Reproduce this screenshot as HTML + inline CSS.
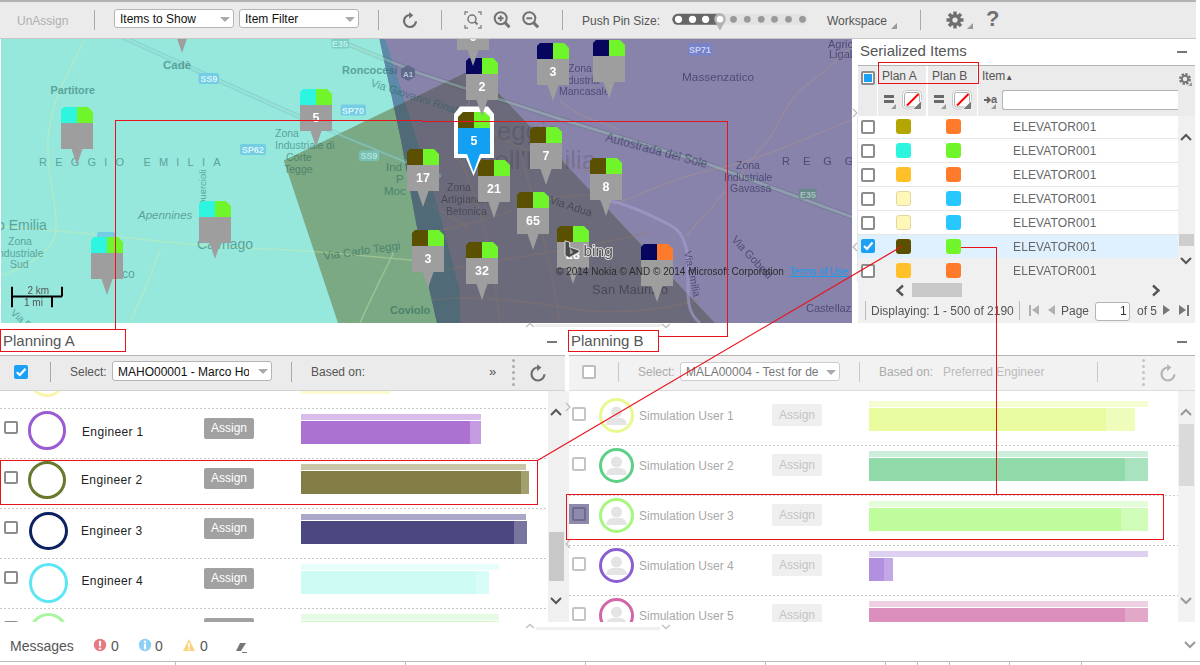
<!DOCTYPE html>
<html><head><meta charset="utf-8">
<style>
*{box-sizing:border-box;margin:0;padding:0}
html,body{width:1200px;height:665px;overflow:hidden;background:#fff;font-family:"Liberation Sans",sans-serif;position:relative}
.a{position:absolute}
.t{position:absolute;white-space:nowrap;line-height:1}
.sep{position:absolute;width:1px;background:#a9a9a9}
.dd{position:absolute;height:19px;background:#fff;border:1px solid #b5b5b5;border-radius:3px;font-size:12px;color:#111;padding:2px 0 0 5px;white-space:nowrap;overflow:hidden;line-height:14px}
.dd:after{content:"";position:absolute;right:3px;top:7px;border-left:5px solid transparent;border-right:5px solid transparent;border-top:5px solid #aaa}
.cb{position:absolute;width:14px;height:14px;border:2px solid #8c8c8c;border-radius:2px;background:#fff}
.sq{position:absolute;width:15px;height:15px;border-radius:3px}
.dots{position:absolute;height:1px;background-image:linear-gradient(to right,#c8c8c8 60%,transparent 60%);background-size:4px 1px}
.btn{position:absolute;width:50px;height:21px;background:#a1a1a1;border-radius:2px;color:#fff;font-size:12px;line-height:21px;text-align:center}
.btnd{position:absolute;width:50px;height:22px;background:#efefef;border-radius:2px;color:#c4c4c4;font-size:12px;line-height:22px;text-align:center}
.ring{position:absolute;border-radius:50%;background:#fff}
.eng{position:absolute;font-size:12px;color:#222;letter-spacing:0.35px;line-height:1;white-space:nowrap}
.sim{position:absolute;font-size:12px;color:#a8a8a8;line-height:1;white-space:nowrap}
svg text{font-family:"Liberation Sans",sans-serif}
</style></head><body>
<div class="a" style="left:0;top:0;width:1196px;height:2px;background:#b3b3b3"></div>
<div class="a" style="left:0;top:2px;width:1196px;height:37px;background:#ebebeb;border-bottom:1px solid #c6c6c6"></div>
<div class="t" style="left:17px;top:15px;font-size:12px;color:#b0b0b0">UnAssign</div>
<div class="sep" style="left:94px;top:10px;height:20px"></div>
<div class="dd" style="left:114px;top:9px;width:120px">Items to Show</div>
<div class="dd" style="left:239px;top:9px;width:120px">Item Filter</div>
<div class="sep" style="left:378px;top:10px;height:20px"></div>
<svg class="a" style="left:400px;top:11px" width="20" height="20" viewBox="0 0 20 20"><path d="M10.2,4 A6,6 0 1 0 16,10.3" fill="none" stroke="#6e6e6e" stroke-width="2.2"/><path d="M9.2,0.9 L13.2,4.2 L9.2,7.8 Z" fill="#6e6e6e"/></svg>
<div class="sep" style="left:441px;top:10px;height:20px"></div>
<svg class="a" style="left:463px;top:10px" width="20" height="20" viewBox="0 0 20 20"><path d="M2,5 V2 H5 M15,2 H18 V5 M18,15 V18 H15 M5,18 H2 V15" fill="none" stroke="#888" stroke-width="1.4"/><circle cx="9" cy="9" r="4" fill="none" stroke="#777" stroke-width="1.5"/><path d="M11.8,11.8 L14.5,14.5" stroke="#777" stroke-width="2"/></svg>
<svg class="a" style="left:491px;top:9px" width="22" height="22" viewBox="0 0 22 22"><circle cx="9.7" cy="9.3" r="6" fill="none" stroke="#727272" stroke-width="2"/><path d="M6.8,9.3 H12.6 M9.7,6.4 V12.2" stroke="#727272" stroke-width="2"/><path d="M14,13.6 L18.5,18.2" stroke="#727272" stroke-width="3"/></svg>
<svg class="a" style="left:520px;top:9px" width="22" height="22" viewBox="0 0 22 22"><circle cx="9.3" cy="9.3" r="6" fill="none" stroke="#727272" stroke-width="2"/><path d="M6.4,9.3 H12.2" stroke="#727272" stroke-width="2"/><path d="M13.6,13.6 L18.1,18.2" stroke="#727272" stroke-width="3"/></svg>
<div class="sep" style="left:562px;top:10px;height:20px"></div>
<div class="t" style="left:582px;top:15px;font-size:12px;color:#555">Push Pin Size:</div>
<svg class="a" style="left:670px;top:10px" width="142" height="22" viewBox="670 10 142 22">
<rect x="672.3" y="13.8" width="135.2" height="11" rx="5.5" fill="#e2e2e2"/>
<path d="M677.8,13.8 H720 V24.8 H677.8 A5.5,5.5 0 0 1 677.8,13.8 Z" fill="#666"/>
<circle cx="678.5" cy="19.3" r="3.6" fill="#fff"/><circle cx="692.5" cy="19.3" r="3.6" fill="#fff"/><circle cx="705.6" cy="19.3" r="3.6" fill="#fff"/>
<circle cx="733.5" cy="19.3" r="3.4" fill="#999"/><circle cx="747.3" cy="19.3" r="3.4" fill="#999"/><circle cx="761.2" cy="19.3" r="3.4" fill="#999"/><circle cx="774.5" cy="19.3" r="3.4" fill="#999"/><circle cx="788.5" cy="19.3" r="3.4" fill="#999"/><circle cx="802.5" cy="19.3" r="3.4" fill="#999"/>
<path d="M714.5,21 A5.8,5.8 0 1 1 725.5,21 L720,30.5 Z" fill="#b3b3b3"/><circle cx="720" cy="19.3" r="3.3" fill="#fff"/>
</svg>
<div class="t" style="left:827px;top:15px;font-size:12px;color:#555">Workspace</div>
<div class="a" style="left:891px;top:23px;width:0;height:0;border-left:6px solid transparent;border-bottom:6px solid #999"></div>
<div class="sep" style="left:920px;top:10px;height:20px"></div>
<svg class="a" style="left:945px;top:10px" width="20" height="20" viewBox="0 0 20 20"><g fill="#6e6e6e"><circle cx="10" cy="10" r="6"/><g id="tt"><rect x="8.3" y="1.5" width="3.4" height="17" /></g><rect x="8.3" y="1.5" width="3.4" height="17" transform="rotate(45 10 10)"/><rect x="8.3" y="1.5" width="3.4" height="17" transform="rotate(90 10 10)"/><rect x="8.3" y="1.5" width="3.4" height="17" transform="rotate(135 10 10)"/></g><circle cx="10" cy="10" r="2.6" fill="#ebebeb"/></svg>
<div class="a" style="left:967px;top:23px;width:0;height:0;border-left:6px solid transparent;border-bottom:6px solid #999"></div>
<div class="t" style="left:986px;top:8px;font-size:22px;font-weight:bold;color:#707070">?</div>
<svg class="a" style="left:1px;top:39px" width="851" height="284" viewBox="1 39 851 284">
<rect x="0" y="0" width="900" height="400" fill="#96e8dc"/>

<polygon points="379.5,39 401,140 415.6,220 429.5,290 437,323 900,323 900,39" fill="#8883ab"/>
<polygon points="379.5,39 385.3,39 416.8,140 434.2,195 445.3,235 459.5,290 460,323 437,323 429.5,290 415.6,220 401,140" fill="#5c8aa8"/>
<polygon points="283.8,160.6 475,68 715,323 338,323" fill="#7aa983"/>
<clipPath id="cp"><polygon points="379.5,39 401,140 415.6,220 429.5,290 437,323 900,323 900,39"/></clipPath>
<polygon points="283.8,160.6 475,68 715,323 338,323" fill="#6b6a7a" clip-path="url(#cp)"/>
<clipPath id="cs"><polygon points="379.5,39 385.3,39 416.8,140 434.2,195 445.3,235 459.5,290 460,323 437,323 429.5,290 415.6,220 401,140"/></clipPath>
<polygon points="283.8,160.6 475,68 715,323 338,323" fill="#506a78" clip-path="url(#cs)"/>
<g opacity="0.35" fill="none" stroke="#9ad0b8" stroke-width="3">
<path d="M335,39 L420,73.6 L560,119 L705,163 L852,217"/>
</g>
<g fill="none" stroke="#000" opacity="0.12" stroke-width="0.8">
<path d="M335,41 L420,75.6 L560,121 L705,165 L852,219"/>
<path d="M335,37 L420,71.6 L560,117 L705,161 L852,215"/>
</g>
<g fill="none" stroke="#6ab4c4" opacity="0.45" stroke-width="1">
<path d="M120,38 L300,119 L345,139 L440,178"/><path d="M122,35 L302,116 L347,136 L442,175"/>
</g>
<g fill="none" stroke="#9ad8d0" opacity="0.5" stroke-width="1.6"><path d="M121,36.5 L301,117.5 L346,137.5 L441,176.5"/></g>
<g fill="none" stroke="#d8f0a8" opacity="0.35" stroke-width="1.6">
<path d="M85,39 C70,70 50,100 48,140 C46,180 60,210 55,235 C50,255 20,270 1,275"/>
<path d="M1,226 C40,230 80,232 130,238 C180,244 230,248 290,250 C330,252 380,258 437,262"/>
<path d="M160,250 C150,280 140,300 130,323"/>
<path d="M395,250 C380,280 370,300 360,323"/>
</g>
<g fill="none" stroke="#c9a07a" opacity="0.22" stroke-width="1.6">
<path d="M852,45 C840,60 820,75 800,90 C780,110 780,130 760,150 C745,165 740,175 737,190"/>
<path d="M612,205 C640,195 680,175 720,168 C760,160 800,140 852,120"/>
<path d="M686,236 C700,220 720,200 725,190"/>
<path d="M470,39 C475,60 480,80 470,100 C460,120 455,140 458,160"/>
<path d="M560,100 C580,120 600,120 620,130"/>
</g>
<g fill="none" stroke="#9a7a60" opacity="0.28" stroke-width="1.3">
<path d="M440,230 C470,225 500,215 530,205 C560,195 590,190 610,201"/>
<path d="M445,270 C480,262 520,258 560,250 C590,244 620,240 650,232"/>
<path d="M460,160 C480,200 490,240 500,323"/>
<path d="M520,150 C530,190 545,230 560,323"/>
<path d="M430,300 C470,295 520,300 580,310 C620,315 660,310 700,300"/>
<path d="M480,120 C500,140 520,150 560,160 C590,168 600,180 620,190"/>
<path d="M420,200 C440,210 450,215 470,230"/>
</g>
<g fill="none" stroke="#a59ed0" opacity="0.6" stroke-width="3">
<path d="M610,201 C630,205 650,215 670,225 C690,235 688,260 688,290 C688,305 690,315 700,323"/>
</g>
<g fill="none" stroke="#7fc8a0" opacity="0.35" stroke-width="1.2">

</g>
<g font-family="Liberation Sans">
<g opacity="0.5" fill="#1d5e58">
<text x="163" y="69" font-size="11.5" font-weight="bold">Cadè</text>
<text x="50.5" y="93.7" font-size="10.8" font-weight="bold">Partitore</text>
<text x="342" y="74" font-size="11" font-weight="bold">Roncocesi</text>
<text x="39" y="165.5" font-size="11" letter-spacing="8.2">REGGIO EMILIA</text>
<text x="138" y="219" font-size="11.5" font-style="italic">Apennines</text>
<text x="-3" y="230" font-size="14">o Emilia</text>
<text x="8" y="244.5" font-size="10.5">Zona</text>
<text x="-2" y="256.5" font-size="10.5">ndustriale</text>
<text x="10" y="268" font-size="10.5">Sud</text>
<text x="197" y="248.5" font-size="14">Cavriago</text>
<text x="122" y="278" font-size="12">co</text>
<text x="206" y="207" font-size="9.5" transform="rotate(-90 206 207)">Quercioli</text>
<text x="324" y="260" font-size="11.5" transform="rotate(-8 324 260)">Via Carlo Teggi</text>
<text x="390" y="314" font-size="11" font-weight="bold">Coviolo</text>
<text x="275" y="137" font-size="10.5">Zona</text>
<text x="275" y="149" font-size="10.5">Industriale di</text>
<text x="286" y="161" font-size="10.5">Corte</text>
<text x="284" y="173" font-size="10.5">Tegge</text>
<text x="370" y="86" font-size="11" transform="rotate(18 370 86)">Via Giovanni Rinaldi</text>
<text x="10" y="314" font-size="10" transform="rotate(40 10 314)">Via P</text>
<text x="386" y="171" font-size="11.5">Ind</text>
<text x="396" y="183" font-size="11.5">P</text>
<text x="384" y="195" font-size="11.5">Moc</text>
</g>
<g opacity="0.45" fill="#040032">
<text x="682" y="81" font-size="11.8">Massenzatico</text>
<text x="828" y="48" font-size="11">Agricola</text>
<text x="829" y="58" font-size="11">Ligabue</text>
<text x="568" y="71.5" font-size="10.5">Zona</text>
<text x="559" y="83.5" font-size="10.5">Industria</text>
<text x="559" y="95" font-size="10.5">Mancasale</text>
<text x="605" y="141" font-size="12" transform="rotate(15 605 141)">Autostrada del Sole</text>
<text x="736" y="168.5" font-size="10.5">Zona</text>
<text x="724" y="181" font-size="10.5">Industriale</text>
<text x="730" y="192" font-size="10.5">Gavassa</text>
<text x="782" y="165" font-size="11" letter-spacing="13">REGG</text>
<text x="806" y="312" font-size="11">Castellazzo</text>
<text x="731" y="240" font-size="11" transform="rotate(47 731 240)">Via Gobetti</text>
<text x="684" y="252" font-size="10.5" transform="rotate(78 684 252)">Via Emilia</text>
</g>
</g>
<g font-family="Liberation Sans"><g opacity="0.33" fill="#000">
<text x="592" y="294" font-size="13">San Maurizio</text>
<text x="549" y="203" font-size="11" transform="rotate(18 549 203)">Via Adua</text>
<text x="447" y="191" font-size="10.5">Zona</text>
<text x="441" y="203" font-size="10.5">Artigianale</text>
<text x="446" y="215" font-size="10.5">Betonica</text>
<text x="478" y="140" font-size="26" opacity="0.4">Reggio</text>
<text x="480" y="169" font-size="26" opacity="0.4">nell'Emilia</text>
</g>
</g>
<g font-family="Liberation Sans" font-weight="bold" text-anchor="middle">
<rect x="331.5" y="38" width="17.5" height="10.5" rx="2" fill="#78cfc5"/><text x="340" y="47" font-size="9" fill="#c0f0ea">E35</text>
<rect x="198.5" y="73" width="20.5" height="11" rx="2" fill="#74cde3"/><text x="209" y="82" font-size="9" fill="#d8f5fa">SS9</text>
<rect x="340.5" y="104.5" width="25.5" height="11" rx="2" fill="#74cde3"/><text x="353" y="113.5" font-size="9" fill="#d8f5fa">SP70</text>
<rect x="240" y="144" width="26" height="11" rx="2" fill="#74cde3"/><text x="253" y="153" font-size="9" fill="#d8f5fa">SP62</text>
<rect x="358.8" y="150.5" width="20.5" height="10.5" rx="2" fill="#78c0b3"/><text x="369" y="159" font-size="9" fill="#b0e0d8">SS9</text>
<rect x="97" y="232" width="18" height="8" rx="2" fill="#74cde3"/>
<rect x="687.7" y="43.4" width="25" height="12" rx="2" fill="#7882c8"/><text x="700" y="52.8" font-size="9" fill="#c8d0f0">SP71</text>
<rect x="798.8" y="188.8" width="18" height="10.5" rx="2" fill="#6a8a8a"/><text x="808" y="197.5" font-size="9" fill="#a8c0c0">E35</text>
<path d="M408,65 L415,69 L415,77 L408,81 L401,77 L401,69 Z" fill="#5f6a8a"/><text x="408" y="76.5" font-size="8" fill="#b8c0d8">A1</text>
</g>
<g stroke="#000" stroke-width="2" fill="none">
<path d="M12,286.8 V307.3 M12,296.5 H62 M62,286.8 V296.5 M52,296.5 V307.3"/>
</g>
<text x="27.5" y="294" font-size="10" fill="#555" font-family="Liberation Sans">2 km</text>
<text x="24" y="306" font-size="10" fill="#555" font-family="Liberation Sans">1 mi</text>

<path d="M169,-5 L182,-5 L182,11 L166,11 L166,-2 Z" fill="#2ef5e0"/><path d="M182,-5 L193,-5 L198,0 L198,11 L182,11 Z" fill="#70f52a"/><path d="M166,11 L198,11 L198,37 L187.5,37 L182,53 L176.5,37 L166,37 Z" fill="#9e9e9e"/><text x="182" y="27.5" text-anchor="middle" font-family="Liberation Sans" font-weight="bold" font-size="12.5" fill="#fff">6</text><path d="M64,107 L77,107 L77,123 L61,123 L61,110 Z" fill="#2ef5e0"/><path d="M77,107 L88,107 L93,112 L93,123 L77,123 Z" fill="#70f52a"/><path d="M61,123 L93,123 L93,149 L82.5,149 L77,165 L71.5,149 L61,149 Z" fill="#9e9e9e"/><path d="M303,89 L316,89 L316,105 L300,105 L300,92 Z" fill="#2ef5e0"/><path d="M316,89 L327,89 L332,94 L332,105 L316,105 Z" fill="#70f52a"/><path d="M300,105 L332,105 L332,131 L321.5,131 L316,147 L310.5,131 L300,131 Z" fill="#9e9e9e"/><text x="316" y="121.5" text-anchor="middle" font-family="Liberation Sans" font-weight="bold" font-size="12.5" fill="#fff">5</text><path d="M202,201 L215,201 L215,217 L199,217 L199,204 Z" fill="#2ef5e0"/><path d="M215,201 L226,201 L231,206 L231,217 L215,217 Z" fill="#70f52a"/><path d="M199,217 L231,217 L231,243 L220.5,243 L215,259 L209.5,243 L199,243 Z" fill="#9e9e9e"/><path d="M94,237 L107,237 L107,253 L91,253 L91,240 Z" fill="#2ef5e0"/><path d="M107,237 L118,237 L123,242 L123,253 L107,253 Z" fill="#70f52a"/><path d="M91,253 L123,253 L123,279 L112.5,279 L107,295 L101.5,279 L91,279 Z" fill="#9e9e9e"/><path d="M540,43 L553,43 L553,59 L537,59 L537,46 Z" fill="#06065e"/><path d="M553,43 L564,43 L569,48 L569,59 L553,59 Z" fill="#70f52a"/><path d="M537,59 L569,59 L569,85 L558.5,85 L553,101 L547.5,85 L537,85 Z" fill="#9e9e9e"/><text x="553" y="75.5" text-anchor="middle" font-family="Liberation Sans" font-weight="bold" font-size="12.5" fill="#fff">3</text><path d="M596,40 L609,40 L609,56 L593,56 L593,43 Z" fill="#06065e"/><path d="M609,40 L620,40 L625,45 L625,56 L609,56 Z" fill="#70f52a"/><path d="M593,56 L625,56 L625,82 L614.5,82 L609,98 L603.5,82 L593,82 Z" fill="#9e9e9e"/><path d="M533,127 L546,127 L546,143 L530,143 L530,130 Z" fill="#5a5000"/><path d="M546,127 L557,127 L562,132 L562,143 L546,143 Z" fill="#70f52a"/><path d="M530,143 L562,143 L562,169 L551.5,169 L546,185 L540.5,169 L530,169 Z" fill="#9e9e9e"/><text x="546" y="159.5" text-anchor="middle" font-family="Liberation Sans" font-weight="bold" font-size="12.5" fill="#fff">7</text><path d="M410,149 L423,149 L423,165 L407,165 L407,152 Z" fill="#5a5000"/><path d="M423,149 L434,149 L439,154 L439,165 L423,165 Z" fill="#70f52a"/><path d="M407,165 L439,165 L439,191 L428.5,191 L423,207 L417.5,191 L407,191 Z" fill="#9e9e9e"/><text x="423" y="181.5" text-anchor="middle" font-family="Liberation Sans" font-weight="bold" font-size="12.5" fill="#fff">17</text><path d="M593,158 L606,158 L606,174 L590,174 L590,161 Z" fill="#5a5000"/><path d="M606,158 L617,158 L622,163 L622,174 L606,174 Z" fill="#70f52a"/><path d="M590,174 L622,174 L622,200 L611.5,200 L606,216 L600.5,200 L590,200 Z" fill="#9e9e9e"/><text x="606" y="190.5" text-anchor="middle" font-family="Liberation Sans" font-weight="bold" font-size="12.5" fill="#fff">8</text><path d="M481,160 L494,160 L494,176 L478,176 L478,163 Z" fill="#5a5000"/><path d="M494,160 L505,160 L510,165 L510,176 L494,176 Z" fill="#70f52a"/><path d="M478,176 L510,176 L510,202 L499.5,202 L494,218 L488.5,202 L478,202 Z" fill="#9e9e9e"/><text x="494" y="192.5" text-anchor="middle" font-family="Liberation Sans" font-weight="bold" font-size="12.5" fill="#fff">21</text><path d="M520,192 L533,192 L533,208 L517,208 L517,195 Z" fill="#5a5000"/><path d="M533,192 L544,192 L549,197 L549,208 L533,208 Z" fill="#70f52a"/><path d="M517,208 L549,208 L549,234 L538.5,234 L533,250 L527.5,234 L517,234 Z" fill="#9e9e9e"/><text x="533" y="224.5" text-anchor="middle" font-family="Liberation Sans" font-weight="bold" font-size="12.5" fill="#fff">65</text><path d="M415,230 L428,230 L428,246 L412,246 L412,233 Z" fill="#5a5000"/><path d="M428,230 L439,230 L444,235 L444,246 L428,246 Z" fill="#70f52a"/><path d="M412,246 L444,246 L444,272 L433.5,272 L428,288 L422.5,272 L412,272 Z" fill="#9e9e9e"/><text x="428" y="262.5" text-anchor="middle" font-family="Liberation Sans" font-weight="bold" font-size="12.5" fill="#fff">3</text><path d="M469,242 L482,242 L482,258 L466,258 L466,245 Z" fill="#5a5000"/><path d="M482,242 L493,242 L498,247 L498,258 L482,258 Z" fill="#70f52a"/><path d="M466,258 L498,258 L498,284 L487.5,284 L482,300 L476.5,284 L466,284 Z" fill="#9e9e9e"/><text x="482" y="274.5" text-anchor="middle" font-family="Liberation Sans" font-weight="bold" font-size="12.5" fill="#fff">32</text><path d="M560,226 L573,226 L573,242 L557,242 L557,229 Z" fill="#5a5000"/><path d="M573,226 L584,226 L589,231 L589,242 L573,242 Z" fill="#70f52a"/><path d="M557,242 L589,242 L589,268 L578.5,268 L573,284 L567.5,268 L557,268 Z" fill="#9e9e9e"/><text x="573" y="258.5" text-anchor="middle" font-family="Liberation Sans" font-weight="bold" font-size="12.5" fill="#fff">28</text><path d="M644,244 L657,244 L657,260 L641,260 L641,247 Z" fill="#06065e"/><path d="M657,244 L668,244 L673,249 L673,260 L657,260 Z" fill="#ff7a2a"/><path d="M641,260 L673,260 L673,286 L662.5,286 L657,302 L651.5,286 L641,286 Z" fill="#9e9e9e"/><path d="M454,114 L460,106.5 L488,106.5 L494,114 L494,158 L481,158 L473.5,176 L466,158 L454,158 Z" fill="#fff"/><path d="M463,112 L474,112 L474,128 L458,128 L458,117 Z" fill="#5a5000"/><path d="M474,112 L485,112 L490,117 L490,128 L474,128 Z" fill="#70f52a"/><path d="M458,128 L490,128 L490,154 L480,154 L473.5,172 L467,154 L458,154 Z" fill="#14a0f2"/><text x="474" y="144.5" text-anchor="middle" font-family="Liberation Sans" font-weight="bold" font-size="12.5" fill="#fff">5</text><path d="M469,58 L482,58 L482,74 L466,74 L466,61 Z" fill="#06065e"/><path d="M482,58 L493,58 L498,63 L498,74 L482,74 Z" fill="#70f52a"/><path d="M466,74 L498,74 L498,100 L487.5,100 L482,116 L476.5,100 L466,100 Z" fill="#9e9e9e"/><text x="482" y="90.5" text-anchor="middle" font-family="Liberation Sans" font-weight="bold" font-size="12.5" fill="#fff">2</text><path d="M460,8 L473,8 L473,24 L457,24 L457,11 Z" fill="#06065e"/><path d="M473,8 L484,8 L489,13 L489,24 L473,24 Z" fill="#70f52a"/><path d="M457,24 L489,24 L489,50 L478.5,50 L473,66 L467.5,50 L457,50 Z" fill="#9e9e9e"/><text x="473" y="40.5" text-anchor="middle" font-family="Liberation Sans" font-weight="bold" font-size="12.5" fill="#fff">6</text>
<g font-family="Liberation Sans">
<g fill="#4a4a4a" stroke="#e6e6e6" stroke-width="0.9" stroke-linejoin="round">
<path d="M565,240.8 L569.6,242.2 L569.6,247 L579.2,250.2 L579.2,252.2 L569.2,257.6 L565,255.6 Z"/>
</g>
<path d="M569.9,247.6 L573.2,252.6 L569.9,254.4 Z" fill="#9e9e9e"/>
<text x="583.5" y="255.5" font-size="15.5" fill="#555" stroke="#ececec" stroke-width="1.5" paint-order="stroke">bing</text>
<text x="556" y="275" font-size="10" fill="#2a2a2a">© 2014 Nokia © AND © 2014 Microsoft Corporation</text>
<text x="789.5" y="275" font-size="10" fill="#1a9af0" text-decoration="underline">Terms of Use</text>
</g>

</svg><div class="a" style="left:852px;top:39px;width:348px;height:284px;background:#fff"></div>
<div class="t" style="left:860px;top:43px;font-size:15px;color:#555">Serialized Items</div>
<div class="a" style="left:1177px;top:51px;width:10px;height:2px;background:#777"></div>
<div class="a" style="left:858px;top:65px;width:337px;height:1px;background:#b4b4b4"></div>
<div class="a" style="left:858px;top:66px;width:337px;height:50px;background:#ebebeb"></div>
<div class="a" style="left:877px;top:66px;width:1px;height:50px;background:#fff"></div>
<div class="a" style="left:926px;top:66px;width:2px;height:50px;background:#fff"></div>
<div class="a" style="left:977px;top:66px;width:1px;height:50px;background:#fff"></div>
<div class="cb" style="left:861px;top:71px;border-color:#8c8c8c"><div class="a" style="left:1px;top:1px;width:8px;height:8px;background:#1aa0f5"></div></div>
<div class="t" style="left:882px;top:70px;font-size:12px;color:#555">Plan A</div>
<div class="t" style="left:932px;top:70px;font-size:12px;color:#555">Plan B</div>
<div class="t" style="left:982px;top:70px;font-size:12px;color:#555">Item<span style="font-size:8px">&#9650;</span></div>
<div class="a" style="left:884px;top:95px;width:10px;height:3px;background:#6a6a6a"></div>
<div class="a" style="left:884px;top:100px;width:10px;height:3px;background:#6a6a6a"></div>
<div class="a" style="left:891px;top:104px;width:0;height:0;border-left:5px solid transparent;border-bottom:5px solid #999"></div>
<svg class="a" style="left:902px;top:90px" width="20" height="20" viewBox="0 0 20 20"><rect x="0.5" y="0.5" width="19" height="18.5" rx="4" fill="#fff" stroke="#c8c8c8"/><rect x="2.5" y="2.5" width="15" height="14.5" rx="2" fill="#fff" stroke="#999" stroke-width="0.8"/><line x1="5" y1="15.5" x2="16.5" y2="4" stroke="#f00" stroke-width="2"/><path d="M10,19.5 L19.5,10 L19.5,19.5 Z" fill="#fff"/><path d="M11.5,19 L19,11.5 L19,19 Z" fill="#777"/></svg>
<div class="a" style="left:934px;top:95px;width:10px;height:3px;background:#6a6a6a"></div>
<div class="a" style="left:934px;top:100px;width:10px;height:3px;background:#6a6a6a"></div>
<div class="a" style="left:941px;top:104px;width:0;height:0;border-left:5px solid transparent;border-bottom:5px solid #999"></div>
<svg class="a" style="left:952px;top:90px" width="20" height="20" viewBox="0 0 20 20"><rect x="0.5" y="0.5" width="19" height="18.5" rx="4" fill="#fff" stroke="#c8c8c8"/><rect x="2.5" y="2.5" width="15" height="14.5" rx="2" fill="#fff" stroke="#999" stroke-width="0.8"/><line x1="5" y1="15.5" x2="16.5" y2="4" stroke="#f00" stroke-width="2"/><path d="M10,19.5 L19.5,10 L19.5,19.5 Z" fill="#fff"/><path d="M11.5,19 L19,11.5 L19,19 Z" fill="#777"/></svg>
<svg class="a" style="left:983px;top:95px" width="14" height="10" viewBox="0 0 14 10"><path d="M1,5 H6 M4,2.2 L7,5 L4,7.8" fill="none" stroke="#666" stroke-width="1.8"/></svg><div class="t" style="left:991px;top:94px;font-size:11px;color:#666;font-weight:bold">a</div>
<div class="a" style="left:991px;top:104px;width:0;height:0;border-left:5px solid transparent;border-bottom:5px solid #999"></div>
<div class="a" style="left:1002px;top:90px;width:176px;height:20px;background:#fff;border:1px solid #b4b4b4;border-right:none;border-radius:3px 0 0 3px"></div>
<svg class="a" style="left:1178px;top:72px" width="16" height="16" viewBox="0 0 16 16"><circle cx="7" cy="7" r="4.5" fill="none" stroke="#777" stroke-width="3" stroke-dasharray="2.2 1.3"/><circle cx="7" cy="7" r="3.2" fill="none" stroke="#777" stroke-width="2"/><path d="M10,14 L14,10 L14,14Z" fill="#999"/></svg>
<div class="a" style="left:857px;top:116px;width:1px;height:166px;background:#e8e8e8"></div>
<div class="a" style="left:858px;top:116px;width:320px;height:24px;background:#fff"></div>
<div class="a" style="left:858px;top:138px;width:320px;height:1px;background:#e6e6e6"></div>
<div class="cb" style="left:861px;top:120px"></div>
<div class="sq" style="left:896px;top:119px;background:#b3a600"></div>
<div class="sq" style="left:946px;top:119px;background:#ff7a2a"></div>
<div class="t" style="left:1013px;top:121px;font-size:12px;color:#666;letter-spacing:0.13px">ELEVATOR001</div>
<div class="a" style="left:858px;top:140px;width:320px;height:24px;background:#fff"></div>
<div class="a" style="left:858px;top:162px;width:320px;height:1px;background:#e6e6e6"></div>
<div class="cb" style="left:861px;top:144px"></div>
<div class="sq" style="left:896px;top:143px;background:#2ef5e0"></div>
<div class="sq" style="left:946px;top:143px;background:#70f52a"></div>
<div class="t" style="left:1013px;top:145px;font-size:12px;color:#666;letter-spacing:0.13px">ELEVATOR001</div>
<div class="a" style="left:858px;top:164px;width:320px;height:24px;background:#fff"></div>
<div class="a" style="left:858px;top:186px;width:320px;height:1px;background:#e6e6e6"></div>
<div class="cb" style="left:861px;top:168px"></div>
<div class="sq" style="left:896px;top:167px;background:#ffc02a"></div>
<div class="sq" style="left:946px;top:167px;background:#ff7a2a"></div>
<div class="t" style="left:1013px;top:169px;font-size:12px;color:#666;letter-spacing:0.13px">ELEVATOR001</div>
<div class="a" style="left:858px;top:188px;width:320px;height:24px;background:#fff"></div>
<div class="a" style="left:858px;top:210px;width:320px;height:1px;background:#e6e6e6"></div>
<div class="cb" style="left:861px;top:192px"></div>
<div class="sq" style="left:896px;top:191px;background:#fff7b8;border:1px solid #e0d8a0"></div>
<div class="sq" style="left:946px;top:191px;background:#27c8ff"></div>
<div class="t" style="left:1013px;top:193px;font-size:12px;color:#666;letter-spacing:0.13px">ELEVATOR001</div>
<div class="a" style="left:858px;top:212px;width:320px;height:24px;background:#fff"></div>
<div class="a" style="left:858px;top:234px;width:320px;height:1px;background:#e6e6e6"></div>
<div class="cb" style="left:861px;top:216px"></div>
<div class="sq" style="left:896px;top:215px;background:#fff7b8;border:1px solid #e0d8a0"></div>
<div class="sq" style="left:946px;top:215px;background:#27c8ff"></div>
<div class="t" style="left:1013px;top:217px;font-size:12px;color:#666;letter-spacing:0.13px">ELEVATOR001</div>
<div class="a" style="left:858px;top:235px;width:320px;height:23px;background:#dff0fe"></div>

<div class="a" style="left:861px;top:239px;width:14px;height:14px;background:#1aa0f5;border-radius:2px"></div>
<svg class="a" style="left:861px;top:239px" width="14" height="14" viewBox="0 0 14 14"><path d="M3,7 L6,10 L11.5,3.5" fill="none" stroke="#fff" stroke-width="2.2"/></svg>
<div class="sq" style="left:896px;top:239px;background:#5a5000"></div>
<div class="sq" style="left:946px;top:239px;background:#70f52a"></div>
<div class="t" style="left:1013px;top:241px;font-size:12px;color:#666;letter-spacing:0.13px">ELEVATOR001</div>
<div class="a" style="left:858px;top:258px;width:320px;height:24px;background:#f0f0f0"></div>

<div class="cb" style="left:861px;top:264px"></div>
<div class="sq" style="left:896px;top:263px;background:#ffc02a"></div>
<div class="sq" style="left:946px;top:263px;background:#ff7a2a"></div>
<div class="t" style="left:1013px;top:265px;font-size:12px;color:#666;letter-spacing:0.13px">ELEVATOR001</div>
<div class="a" style="left:1178px;top:116px;width:17px;height:166px;background:#f0f0f0"></div>
<svg class="a" style="left:1180px;top:133px" width="12" height="8" viewBox="0 0 12 8"><path d="M1,7 L6,2 L11,7" fill="none" stroke="#555" stroke-width="2"/></svg>
<div class="a" style="left:1179px;top:234px;width:15px;height:12px;background:#cdcdcd"></div>
<svg class="a" style="left:1180px;top:257px" width="12" height="8" viewBox="0 0 12 8"><path d="M1,1 L6,6 L11,1" fill="none" stroke="#555" stroke-width="2"/></svg>
<div class="a" style="left:858px;top:282px;width:337px;height:41px;background:#f0f0f0"></div>
<svg class="a" style="left:894px;top:284px" width="12" height="13" viewBox="0 0 12 13"><path d="M9,1.5 L3.5,6.5 L9,11.5" fill="none" stroke="#555" stroke-width="2.4"/></svg>
<div class="a" style="left:912px;top:283px;width:50px;height:14px;background:#c8c8c8"></div>
<svg class="a" style="left:1150px;top:284px" width="12" height="13" viewBox="0 0 12 13"><path d="M3,1.5 L8.5,6.5 L3,11.5" fill="none" stroke="#555" stroke-width="2.4"/></svg>
<div class="a" style="left:865px;top:301px;width:1px;height:19px;background:#bbb"></div>
<div class="t" style="left:871px;top:305px;font-size:12px;color:#555">Displaying: 1 - 500 of 2190</div>
<div class="a" style="left:1019px;top:301px;width:1px;height:19px;background:#bbb"></div>
<div class="a" style="left:1029px;top:305px;width:2px;height:11px;background:#b0b0b0"></div>
<div class="a" style="left:1032px;top:305px;width:0;height:0;border-top:5.5px solid transparent;border-bottom:5.5px solid transparent;border-right:7px solid #b0b0b0"></div>
<div class="a" style="left:1048px;top:305px;width:0;height:0;border-top:5.5px solid transparent;border-bottom:5.5px solid transparent;border-right:7px solid #b0b0b0"></div>
<div class="t" style="left:1061px;top:305px;font-size:12px;color:#555">Page</div>
<div class="a" style="left:1095px;top:302px;width:35px;height:19px;background:#fff;border:1px solid #b4b4b4;border-radius:3px"></div>
<div class="t" style="left:1120px;top:305px;font-size:12px;color:#333">1</div>
<div class="t" style="left:1137px;top:305px;font-size:12px;color:#555">of 5</div>
<div class="a" style="left:1163px;top:305px;width:0;height:0;border-top:5.5px solid transparent;border-bottom:5.5px solid transparent;border-left:7px solid #777"></div>
<div class="a" style="left:1179px;top:305px;width:0;height:0;border-top:5.5px solid transparent;border-bottom:5.5px solid transparent;border-left:7px solid #777"></div>
<div class="a" style="left:1187px;top:305px;width:2px;height:11px;background:#777"></div>
<svg class="a" style="left:852px;top:108px" width="6" height="10" viewBox="0 0 6 10"><path d="M1,1 L5,5 L1,9" fill="none" stroke="#bbb" stroke-width="1.2"/></svg>
<svg class="a" style="left:852px;top:242px" width="6" height="10" viewBox="0 0 6 10"><path d="M5,1 L1,5 L5,9" fill="none" stroke="#bbb" stroke-width="1.2"/></svg>
<div class="t" style="left:3px;top:333px;font-size:15px;color:#555">Planning A</div>
<div class="a" style="left:547px;top:341px;width:10px;height:2px;background:#777"></div>
<div class="a" style="left:0;top:355px;width:565px;height:1px;background:#b4b4b4"></div>
<div class="a" style="left:0;top:356px;width:565px;height:34px;background:#ebebeb"></div>
<div class="a" style="left:0;top:390px;width:565px;height:1px;background:#d2d2d2"></div>
<div class="a" style="left:14px;top:365px;width:14px;height:14px;background:#1aa0f5;border-radius:2px"></div>
<svg class="a" style="left:14px;top:365px" width="14" height="14" viewBox="0 0 14 14"><path d="M2.8,7.2 L5.8,10 L11.5,3.8" fill="none" stroke="#fff" stroke-width="2.2"/></svg>
<div class="sep" style="left:50px;top:362px;height:20px"></div>
<div class="t" style="left:70px;top:366px;font-size:12px;color:#555">Select:</div>
<div class="dd" style="left:112px;top:361px;width:160px;height:20px;color:#111;padding-top:3px">MAHO00001 - Marco Ho<span style="display:inline-block;width:20px;height:14px;background:#fff;position:absolute;left:136px;top:2px"></span></div>
<div class="sep" style="left:291px;top:362px;height:20px"></div>
<div class="t" style="left:311px;top:366px;font-size:12px;color:#555">Based on:</div>
<div class="t" style="left:489px;top:365px;font-size:13px;color:#555">&raquo;</div>
<div class="a" style="left:512px;top:359.0px;width:3px;height:3px;border-radius:50%;background:#aaa"></div>
<div class="a" style="left:512px;top:365.1px;width:3px;height:3px;border-radius:50%;background:#aaa"></div>
<div class="a" style="left:512px;top:371.2px;width:3px;height:3px;border-radius:50%;background:#aaa"></div>
<div class="a" style="left:512px;top:377.3px;width:3px;height:3px;border-radius:50%;background:#aaa"></div>
<div class="a" style="left:512px;top:383.4px;width:3px;height:3px;border-radius:50%;background:#aaa"></div>
<svg class="a" style="left:528px;top:364px" width="20" height="20" viewBox="0 0 20 20"><path d="M10.2,3.5 A6.5,6.5 0 1 0 16.5,10.3" fill="none" stroke="#6e6e6e" stroke-width="2.2"/><path d="M9.2,0.2 L13.4,3.6 L9.2,7.3 Z" fill="#6e6e6e"/></svg>
<div class="a" style="left:548px;top:391px;width:17px;height:231px;background:#f0f0f0"></div>
<div class="a" style="left:549px;top:532px;width:15px;height:49px;background:#c8c8c8"></div>
<svg class="a" style="left:550px;top:408px" width="12" height="8" viewBox="0 0 12 8"><path d="M1,7 L6,2 L11,7" fill="none" stroke="#555" stroke-width="2"/></svg>
<svg class="a" style="left:550px;top:597px" width="12" height="8" viewBox="0 0 12 8"><path d="M1,1 L6,6 L11,1" fill="none" stroke="#555" stroke-width="2"/></svg>
<div class="a" style="left:0;top:391px;width:548px;height:231px;overflow:hidden"><div class="a" style="left:0;top:-391px;width:1200px;height:665px"><div class="ring" style="left:28px;top:359px;width:38px;height:38px;border:3px solid #faf6b0"></div>
<div class="a" style="left:301px;top:391px;width:89px;height:3px;background:#fbfad0"></div>
<div class="dots" style="left:0;top:408px;width:548px"></div>
<div class="cb" style="left:4px;top:421px;width:14px;height:13px"></div>
<div class="ring" style="left:27.5px;top:411px;width:38.5px;height:38.5px;border:3px solid #9b5bd3"></div>
<div class="eng" style="left:82px;top:426px">Engineer 1</div>
<div class="btn" style="left:204px;top:418px">Assign</div>
<div class="a" style="left:301px;top:414px;width:180px;height:6px;background:#dbbdec"></div>
<div class="a" style="left:301px;top:421px;width:180px;height:23px;background:#c49ae0"></div>
<div class="a" style="left:301px;top:421px;width:169px;height:23px;background:#ab72d1"></div>
<div class="dots" style="left:0;top:458px;width:548px"></div>
<div class="cb" style="left:4px;top:471px;width:14px;height:13px"></div>
<div class="ring" style="left:28px;top:461px;width:38px;height:38px;border:3px solid #67792c"></div>
<div class="eng" style="left:81px;top:474px">Engineer 2</div>
<div class="btn" style="left:204px;top:468px">Assign</div>
<div class="a" style="left:301px;top:464px;width:225px;height:6px;background:#c8c5a8"></div>
<div class="a" style="left:301px;top:471px;width:228px;height:23px;background:#a3a070"></div>
<div class="a" style="left:301px;top:471px;width:220px;height:23px;background:#827d45"></div>
<div class="dots" style="left:0;top:508px;width:548px"></div>
<div class="cb" style="left:4px;top:521px;width:14px;height:13px"></div>
<div class="ring" style="left:28.5px;top:511.5px;width:39px;height:38.5px;border:3px solid #0d2060"></div>
<div class="eng" style="left:81px;top:525px">Engineer 3</div>
<div class="btn" style="left:204px;top:518px">Assign</div>
<div class="a" style="left:301px;top:514px;width:225px;height:6px;background:#aaa8c8"></div>
<div class="a" style="left:301px;top:521px;width:226px;height:23px;background:#7775a0"></div>
<div class="a" style="left:301px;top:521px;width:213px;height:23px;background:#4b4880"></div>
<div class="dots" style="left:0;top:558px;width:548px"></div>
<div class="cb" style="left:4px;top:571px;width:14px;height:13px"></div>
<div class="ring" style="left:28.5px;top:562.5px;width:39.5px;height:40px;border:3px solid #5ce6f5"></div>
<div class="eng" style="left:81.5px;top:574.5px">Engineer 4</div>
<div class="btn" style="left:204px;top:568px">Assign</div>
<div class="a" style="left:301px;top:564px;width:198px;height:6px;background:#e8fefb"></div>
<div class="a" style="left:301px;top:571px;width:188px;height:23px;background:#d8fdf8"></div>
<div class="a" style="left:301px;top:571px;width:175px;height:23px;background:#ccfcf4"></div>
<div class="dots" style="left:0;top:608px;width:548px"></div>
<div class="cb" style="left:4px;top:621px;width:14px;height:13px"></div>
<div class="ring" style="left:28.5px;top:612.5px;width:39.5px;height:40px;border:3px solid #a8f5a0"></div>
<div class="eng" style="left:81px;top:626px">Engineer 5</div>
<div class="btn" style="left:204px;top:618px">Assign</div>
<div class="a" style="left:301px;top:614px;width:198px;height:6px;background:#e6fbe4"></div>
<div class="a" style="left:301px;top:621px;width:198px;height:23px;background:#d8fad0"></div>
<div class="a" style="left:301px;top:621px;width:189px;height:23px;background:#c8f8c0"></div>
</div></div>
<div class="a" style="left:0;top:622px;width:1200px;height:39px;background:#fff"></div>
<svg class="a" style="left:525px;top:623px" width="10" height="6" viewBox="0 0 10 6"><path d="M1,5 L5,1.5 L9,5" fill="none" stroke="#c4c4c4" stroke-width="1.6"/></svg>
<div class="a" style="left:536px;top:627px;width:664px;height:3px;background:#efefef"></div>
<svg class="a" style="left:525px;top:322px" width="10" height="6" viewBox="0 0 10 6"><path d="M1,5 L5,1.5 L9,5" fill="none" stroke="#c4c4c4" stroke-width="1.6"/></svg>
<div class="a" style="left:535px;top:324px;width:127px;height:3px;background:#efefef"></div>
<svg class="a" style="left:661px;top:323px" width="10" height="6" viewBox="0 0 10 6"><path d="M1,1 L5,4.5 L9,1" fill="none" stroke="#c4c4c4" stroke-width="1.6"/></svg>
<div class="a" style="left:565px;top:391px;width:4px;height:231px;background:#f0f0f0"></div>
<div class="t" style="left:571px;top:333px;font-size:15px;color:#555">Planning B</div>
<div class="a" style="left:1177px;top:341px;width:10px;height:2px;background:#777"></div>
<div class="a" style="left:569px;top:355px;width:626px;height:1px;background:#b4b4b4"></div>
<div class="a" style="left:569px;top:356px;width:626px;height:34px;background:#f2f2f2"></div>
<div class="a" style="left:569px;top:390px;width:626px;height:1px;background:#dcdcdc"></div>
<div class="cb" style="left:582px;top:365px;border-color:#bdbdbd"></div>
<div class="sep" style="left:618px;top:362px;height:20px;background:#c8c8c8"></div>
<div class="t" style="left:638px;top:366px;font-size:12px;color:#aaa">Select:</div>
<div class="dd" style="left:680px;top:362px;width:160px;height:19px;color:#777;border-color:#ccc;padding-top:2px">MALA00004 - Test for de</div>
<div class="sep" style="left:859px;top:362px;height:20px;background:#c8c8c8"></div>
<div class="t" style="left:879px;top:366px;font-size:12px;color:#aaa">Based on:</div>
<div class="t" style="left:943px;top:366px;font-size:12px;color:#bbb">Preferred Engineer</div>
<div class="sep" style="left:1097px;top:362px;height:20px;background:#c8c8c8"></div>
<div class="a" style="left:1142px;top:359.0px;width:3px;height:3px;border-radius:50%;background:#c4c4c4"></div>
<div class="a" style="left:1142px;top:365.1px;width:3px;height:3px;border-radius:50%;background:#c4c4c4"></div>
<div class="a" style="left:1142px;top:371.2px;width:3px;height:3px;border-radius:50%;background:#c4c4c4"></div>
<div class="a" style="left:1142px;top:377.3px;width:3px;height:3px;border-radius:50%;background:#c4c4c4"></div>
<div class="a" style="left:1142px;top:383.4px;width:3px;height:3px;border-radius:50%;background:#c4c4c4"></div>
<svg class="a" style="left:1158px;top:364px" width="20" height="20" viewBox="0 0 20 20"><path d="M10.2,3.5 A6.5,6.5 0 1 0 16.5,10.3" fill="none" stroke="#b4b4b4" stroke-width="2.2"/><path d="M9.2,0.2 L13.4,3.6 L9.2,7.3 Z" fill="#b4b4b4"/></svg>
<div class="a" style="left:1178px;top:391px;width:17px;height:231px;background:#f2f2f2"></div>
<div class="a" style="left:1179px;top:424px;width:15px;height:62px;background:#dadada"></div>
<svg class="a" style="left:1180px;top:408px" width="12" height="8" viewBox="0 0 12 8"><path d="M1,7 L6,2 L11,7" fill="none" stroke="#999" stroke-width="2"/></svg>
<svg class="a" style="left:1180px;top:597px" width="12" height="8" viewBox="0 0 12 8"><path d="M1,1 L6,6 L11,1" fill="none" stroke="#999" stroke-width="2"/></svg>
<div class="a" style="left:569px;top:391px;width:609px;height:231px;overflow:hidden"><div class="a" style="left:-569px;top:-391px;width:1200px;height:665px"><div class="cb" style="left:572px;top:407px;width:14px;height:14px;border-color:#c4c4c4"></div>
<div class="ring" style="left:599px;top:398px;width:35px;height:35px;border:3px solid #e9f98f"></div>
<svg class="a" style="left:603px;top:402px" width="27" height="27" viewBox="0 0 27 27"><circle cx="13.5" cy="10" r="5.5" fill="#e4e4e4"/><path d="M3,23 C4,16 8,16 13.5,16 C19,16 23,16 24,23 Z" fill="#e4e4e4"/></svg>
<div class="sim" style="left:639px;top:410px">Simulation User 1</div>
<div class="btnd" style="left:772px;top:404px">Assign</div>
<div class="a" style="left:869px;top:401px;width:279px;height:6px;background:#f4fdd2"></div>
<div class="a" style="left:869px;top:408px;width:266px;height:23px;background:#eefcbc"></div>
<div class="a" style="left:869px;top:408px;width:237px;height:23px;background:#e8fb9f"></div>
<div class="dots" style="left:569px;top:445px;width:609px"></div>
<div class="cb" style="left:572px;top:457px;width:14px;height:14px;border-color:#c4c4c4"></div>
<div class="ring" style="left:599px;top:448px;width:35px;height:35px;border:3px solid #5dcf86"></div>
<svg class="a" style="left:603px;top:452px" width="27" height="27" viewBox="0 0 27 27"><circle cx="13.5" cy="10" r="5.5" fill="#e4e4e4"/><path d="M3,23 C4,16 8,16 13.5,16 C19,16 23,16 24,23 Z" fill="#e4e4e4"/></svg>
<div class="sim" style="left:639px;top:460px">Simulation User 2</div>
<div class="btnd" style="left:772px;top:454px">Assign</div>
<div class="a" style="left:869px;top:451px;width:279px;height:6px;background:#cdeedb"></div>
<div class="a" style="left:869px;top:458px;width:279px;height:23px;background:#a8e2be"></div>
<div class="a" style="left:869px;top:458px;width:256px;height:23px;background:#8fdaa8"></div>
<div class="dots" style="left:569px;top:495px;width:609px"></div>
<div class="a" style="left:569px;top:504px;width:20px;height:20px;background:#8e8aab"></div>
<div class="cb" style="left:572px;top:507px;border-color:#6e6a90;background:#8e8aab"></div>
<div class="ring" style="left:599px;top:498px;width:35px;height:35px;border:3px solid #a6f77e"></div>
<svg class="a" style="left:603px;top:502px" width="27" height="27" viewBox="0 0 27 27"><circle cx="13.5" cy="10" r="5.5" fill="#e4e4e4"/><path d="M3,23 C4,16 8,16 13.5,16 C19,16 23,16 24,23 Z" fill="#e4e4e4"/></svg>
<div class="sim" style="left:639px;top:510px">Simulation User 3</div>
<div class="btnd" style="left:772px;top:504px">Assign</div>
<div class="a" style="left:869px;top:501px;width:279px;height:6px;background:#e4fdd8"></div>
<div class="a" style="left:869px;top:508px;width:279px;height:23px;background:#d0fdb8"></div>
<div class="a" style="left:869px;top:508px;width:252px;height:23px;background:#bffc9c"></div>
<div class="dots" style="left:569px;top:545px;width:609px"></div>
<div class="cb" style="left:572px;top:557px;width:14px;height:14px;border-color:#c4c4c4"></div>
<div class="ring" style="left:599px;top:548px;width:35px;height:35px;border:3px solid #8b5fd0"></div>
<svg class="a" style="left:603px;top:552px" width="27" height="27" viewBox="0 0 27 27"><circle cx="13.5" cy="10" r="5.5" fill="#e4e4e4"/><path d="M3,23 C4,16 8,16 13.5,16 C19,16 23,16 24,23 Z" fill="#e4e4e4"/></svg>
<div class="sim" style="left:639px;top:560px">Simulation User 4</div>
<div class="btnd" style="left:772px;top:554px">Assign</div>
<div class="a" style="left:869px;top:551px;width:279px;height:6px;background:#ddd0f0"></div>
<div class="a" style="left:869px;top:558px;width:24px;height:23px;background:#c3a8e6"></div>
<div class="a" style="left:869px;top:558px;width:15px;height:23px;background:#b090df"></div>
<div class="dots" style="left:569px;top:595px;width:609px"></div>
<div class="cb" style="left:572px;top:607px;width:14px;height:14px;border-color:#c4c4c4"></div>
<div class="ring" style="left:599px;top:598px;width:35px;height:35px;border:3px solid #d066a8"></div>
<svg class="a" style="left:603px;top:602px" width="27" height="27" viewBox="0 0 27 27"><circle cx="13.5" cy="10" r="5.5" fill="#e4e4e4"/><path d="M3,23 C4,16 8,16 13.5,16 C19,16 23,16 24,23 Z" fill="#e4e4e4"/></svg>
<div class="sim" style="left:639px;top:610px">Simulation User 5</div>
<div class="btnd" style="left:772px;top:604px">Assign</div>
<div class="a" style="left:869px;top:601px;width:279px;height:6px;background:#eed0e2"></div>
<div class="a" style="left:869px;top:608px;width:279px;height:23px;background:#e2a8c8"></div>
<div class="a" style="left:869px;top:608px;width:256px;height:23px;background:#dc8fbd"></div>
</div></div>
<div class="a" style="left:565px;top:622px;width:635px;height:39px;background:#fff"></div>
<div class="a" style="left:560px;top:627px;width:100px;height:3px;background:#efefef"></div>
<div class="a" style="left:536px;top:627px;width:664px;height:3px;background:#fff"></div>
<div class="a" style="left:536px;top:627px;width:124px;height:3px;background:#efefef"></div>
<svg class="a" style="left:661px;top:624px" width="10" height="6" viewBox="0 0 10 6"><path d="M1,1 L5,4.5 L9,1" fill="none" stroke="#c4c4c4" stroke-width="1.6"/></svg>
<svg class="a" style="left:1184px;top:641px" width="12" height="8" viewBox="0 0 12 8"><path d="M1,1 L6,6 L11,1" fill="none" stroke="#999" stroke-width="2"/></svg>
<svg class="a" style="left:565px;top:402px" width="6" height="10" viewBox="0 0 6 10"><path d="M1,1 L5,5 L1,9" fill="none" stroke="#bbb" stroke-width="1.2"/></svg>
<svg class="a" style="left:565px;top:539px" width="6" height="10" viewBox="0 0 6 10"><path d="M5,1 L1,5 L5,9" fill="none" stroke="#bbb" stroke-width="1.2"/></svg>
<div class="t" style="left:10px;top:639px;font-size:14px;color:#555">Messages</div>
<svg class="a" style="left:93px;top:638px" width="14" height="14" viewBox="0 0 14 14"><circle cx="7" cy="7" r="6.2" fill="#e57a80"/><rect x="5.9" y="2.8" width="2.2" height="5.6" rx="1" fill="#fff"/><circle cx="7" cy="10.6" r="1.2" fill="#fff"/></svg>
<div class="t" style="left:111px;top:639px;font-size:14px;color:#555">0</div>
<svg class="a" style="left:138px;top:638px" width="14" height="14" viewBox="0 0 14 14"><circle cx="7" cy="7" r="6.2" fill="#8ccff5"/><circle cx="7" cy="3.6" r="1.2" fill="#fff"/><rect x="5.9" y="5.6" width="2.2" height="5.8" rx="0.5" fill="#fff"/></svg>
<div class="t" style="left:155px;top:639px;font-size:14px;color:#555">0</div>
<svg class="a" style="left:182px;top:638px" width="14" height="14" viewBox="0 0 14 14"><path d="M7,1 L13,13 L1,13 Z" fill="#fcd37e"/><rect x="6.1" y="5" width="1.8" height="4.5" fill="#fff"/><rect x="6.1" y="10.5" width="1.8" height="1.6" fill="#fff"/></svg>
<div class="t" style="left:200px;top:639px;font-size:14px;color:#555">0</div>
<svg class="a" style="left:235px;top:642px" width="14" height="12" viewBox="0 0 14 12"><path d="M5,1 H11 L6,9 H1 Z" fill="#777"/><path d="M4.5,4.5 L9,4.5" stroke="#fff" stroke-width="0"/><path d="M7,10.5 H12" stroke="#777" stroke-width="1"/></svg>
<div class="a" style="left:0;top:661px;width:1200px;height:1px;background:#bcbcbc"></div>
<div class="a" style="left:175px;top:662px;width:1px;height:3px;background:#bcbcbc"></div>
<div class="a" style="left:405px;top:662px;width:1px;height:3px;background:#bcbcbc"></div>
<div class="a" style="left:585px;top:662px;width:1px;height:3px;background:#bcbcbc"></div>
<div class="a" style="left:765px;top:662px;width:1px;height:3px;background:#bcbcbc"></div>
<div class="a" style="left:885px;top:662px;width:1px;height:3px;background:#bcbcbc"></div>
<div class="a" style="left:917px;top:662px;width:1px;height:3px;background:#bcbcbc"></div>
<div class="a" style="left:949px;top:662px;width:1px;height:3px;background:#bcbcbc"></div>
<div class="a" style="left:1009px;top:662px;width:1px;height:3px;background:#bcbcbc"></div>
<div class="a" style="left:1081px;top:662px;width:1px;height:3px;background:#bcbcbc"></div>
<svg class="a" style="left:0;top:0;pointer-events:none" width="1200" height="665" viewBox="0 0 1200 665">
<g fill="none" stroke="#e8121c" stroke-width="1.2" shape-rendering="crispEdges">
<rect x="0.5" y="329.5" width="125" height="22"/>
<rect x="568.5" y="330.5" width="90" height="21"/>
<polyline points="115.5,329.5 115.5,120.5 421.5,120.5"/><polyline points="421.5,121.5 727.5,121.5 727.5,336.5 658.5,336.5"/>
<rect x="878.5" y="62.5" width="100" height="21"/>
<rect x="0.5" y="460.5" width="537" height="44"/>
<rect x="566.5" y="494.5" width="597" height="45"/>
<polyline points="961,247.5 996.5,247.5 996.5,494.5"/>
</g>
<line x1="537.5" y1="460.5" x2="902" y2="246.3" stroke="#e8121c" stroke-width="1.2"/>
</svg>
</body></html>
